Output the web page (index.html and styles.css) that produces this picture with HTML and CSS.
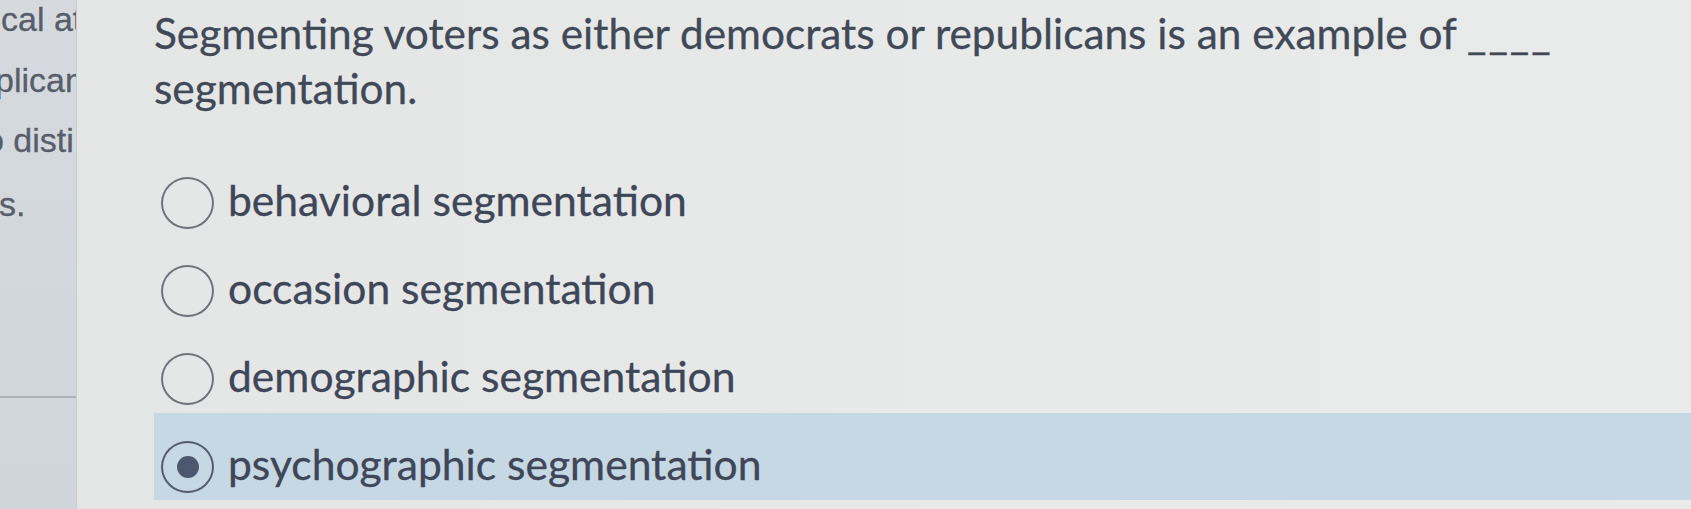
FILE: index.html
```html
<!DOCTYPE html>
<html lang="en">
<head>
  <meta charset="UTF-8">
  <meta name="viewport" content="width=device-width, initial-scale=1.0">
  <title>Quiz Question</title>
  <link rel="stylesheet" href="styles.css">
</head>
<body>
  <!-- Left Panel (previous question, cut off) -->
  <div class="side-panel">
    <div class="side-text">
      <p class="side-line line-1">cal at</p>
      <p class="side-line line-2">plican</p>
      <p class="side-line line-3">o disti</p>
      <p class="side-line line-4">s.</p>
    </div>
    <div class="side-rule"></div>
  </div>

  <!-- Question -->
  <div class="main-panel">
    <p class="question">Segmenting voters as either democrats or republicans is an example of <span class="blank">____</span> segmentation.</p>

    <div class="options">
      <label class="option">
        <span class="radio"></span>
        <span class="option-text">behavioral segmentation</span>
      </label>
      <label class="option">
        <span class="radio"></span>
        <span class="option-text">occasion segmentation</span>
      </label>
      <label class="option">
        <span class="radio"></span>
        <span class="option-text">demographic segmentation</span>
      </label>
      <label class="option selected">
        <span class="radio"><span class="dot"></span></span>
        <span class="option-text">psychographic segmentation</span>
      </label>
    </div>
  </div>
</body>
</html>
```

FILE: styles.css
```css
/* General Styles */
* {
  margin: 0;
  padding: 0;
  box-sizing: border-box;
}

body {
  display: flex;
  height: 509px;
  overflow: hidden;
  background: linear-gradient(90deg, #e4e6e6 0%, #e8eaea 60%, #e9ebeb 100%);
  font-family: Lato, "Open Sans", sans-serif;
}

/* Left panel */
.side-panel {
  width: 77px;
  flex-shrink: 0;
  background: linear-gradient(180deg, #d6dadf 0%, #d0d5db 100%);
  border-right: 1px solid #c8cdd3;
  overflow: hidden;
  display: flex;
  flex-direction: column;
}

.side-text {
  font-family: "Liberation Sans", Arial, sans-serif;
  font-size: 34px;
  color: #575e6a;
  white-space: nowrap;
  height: 396px;
  -webkit-text-stroke: 0.3px #575e6a;
}

.side-line {
  line-height: 64px;
}

.line-1 { margin-left: 1px; margin-top: -13px; }
.line-2 { margin-left: -5px; margin-top: -3px; }
.line-3 { margin-left: -15px; margin-top: -4px; }
.line-4 { margin-left: -1px; margin-top: 0; }

.side-rule {
  height: 2px;
  background: #aeb3ba;
}

/* Main panel */
.main-panel {
  flex: 1;
  padding-left: 77px;
  padding-top: 5px;
}

.question {
  font-size: 42.4px;
  line-height: 55px;
  color: #414957;
  max-width: 1500px;
  height: 144px;
  -webkit-text-stroke: 0.3px #414957;
}

.blank {
  letter-spacing: 2px;
}

.options {
  display: flex;
  flex-direction: column;
}

.option {
  display: flex;
  align-items: center;
  height: 88px;
  padding-top: 20px;
  padding-left: 7px;
  gap: 14px;
}

.option.selected {
  background: #c6d8e3;
  height: 87px;
}

.radio {
  width: 53px;
  height: 52px;
  border: 2.5px solid #6f737a;
  border-radius: 50%;
  display: flex;
  align-items: center;
  justify-content: center;
  flex-shrink: 0;
}

.selected .radio {
  border-color: #555d6b;
}

.dot {
  width: 22px;
  height: 22px;
  border-radius: 50%;
  background: #4c586d;
}

.option-text {
  font-size: 42.6px;
  line-height: 52px;
  color: #3e4658;
  margin-bottom: 6px;
  -webkit-text-stroke: 0.3px #3e4658;
}
```
